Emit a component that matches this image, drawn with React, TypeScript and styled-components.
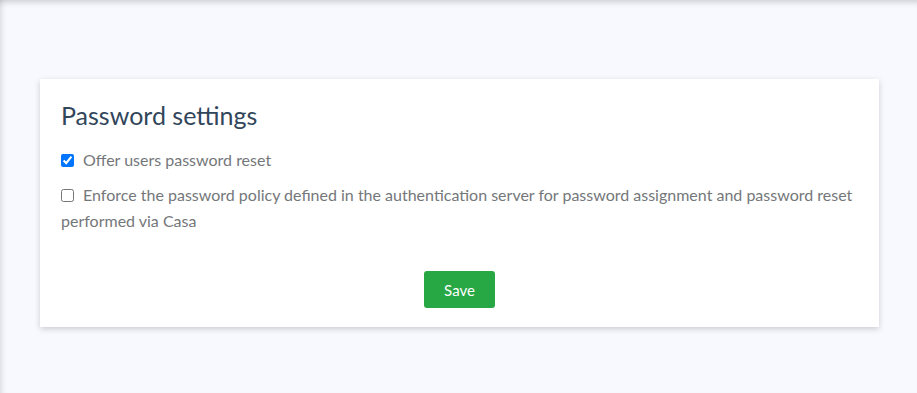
import React from "react";
import styled, { createGlobalStyle } from "styled-components";

const Global = createGlobalStyle`
  html, body { margin: 0; padding: 0; background: #f8f9fe; }
  body { font-family: Lato, "Open Sans", sans-serif; }
`;

const Page = styled.div`
  min-height: 393px;
  box-sizing: border-box;
  padding: 79px 38px 40px 40px;
  background: #f8f9fe;
  box-shadow: inset 0 7px 6px -5px rgba(0, 0, 0, 0.18), inset 6px 0 6px -5px rgba(0, 0, 0, 0.15);
`;

const Card = styled.section`
  background: #fff;
  box-shadow: 0 2px 6px rgba(0, 0, 0, 0.18);
  padding: 20px 21px 19px;
  display: flex;
  flex-direction: column;
`;

const Title = styled.h2`
  margin: 0 0 16px;
  font-size: 25px;
  font-weight: 400;
  line-height: 32px;
  color: #32465b;
`;

const Option = styled.label`
  display: flex;
  align-items: flex-start;
  gap: 9px;
  font-size: 16px;
  line-height: 26px;
  color: #74777a;
  margin-bottom: 9px;
`;

const Box = styled.input`
  width: 13px;
  height: 13px;
  margin: 7px 0 0 0;
  flex: none;
`;

const Text = styled.span`
  text-indent: 22px;
  margin-left: calc(-13px - 9px);
`;

const Actions = styled.div`
  display: flex;
  justify-content: center;
  margin-top: 28px;
`;

const Button = styled.button`
  width: 71px;
  height: 37px;
  border: none;
  border-radius: 3px;
  background: #28a745;
  color: #fff;
  font-family: Lato, sans-serif;
  font-size: 15px;
  cursor: pointer;
`;

export default function App() {
  return (
    <>
      <Global />
      <Page>
        <Card>
          <Title>Password settings</Title>
          <Option>
            <Box type="checkbox" defaultChecked />
            <Text>Offer users password reset</Text>
          </Option>
          <Option>
            <Box type="checkbox" />
            <Text>
              Enforce the password policy defined in the authentication server for password assignment and password
              reset performed via Casa
            </Text>
          </Option>
          <Actions>
            <Button>Save</Button>
          </Actions>
        </Card>
      </Page>
    </>
  );
}
